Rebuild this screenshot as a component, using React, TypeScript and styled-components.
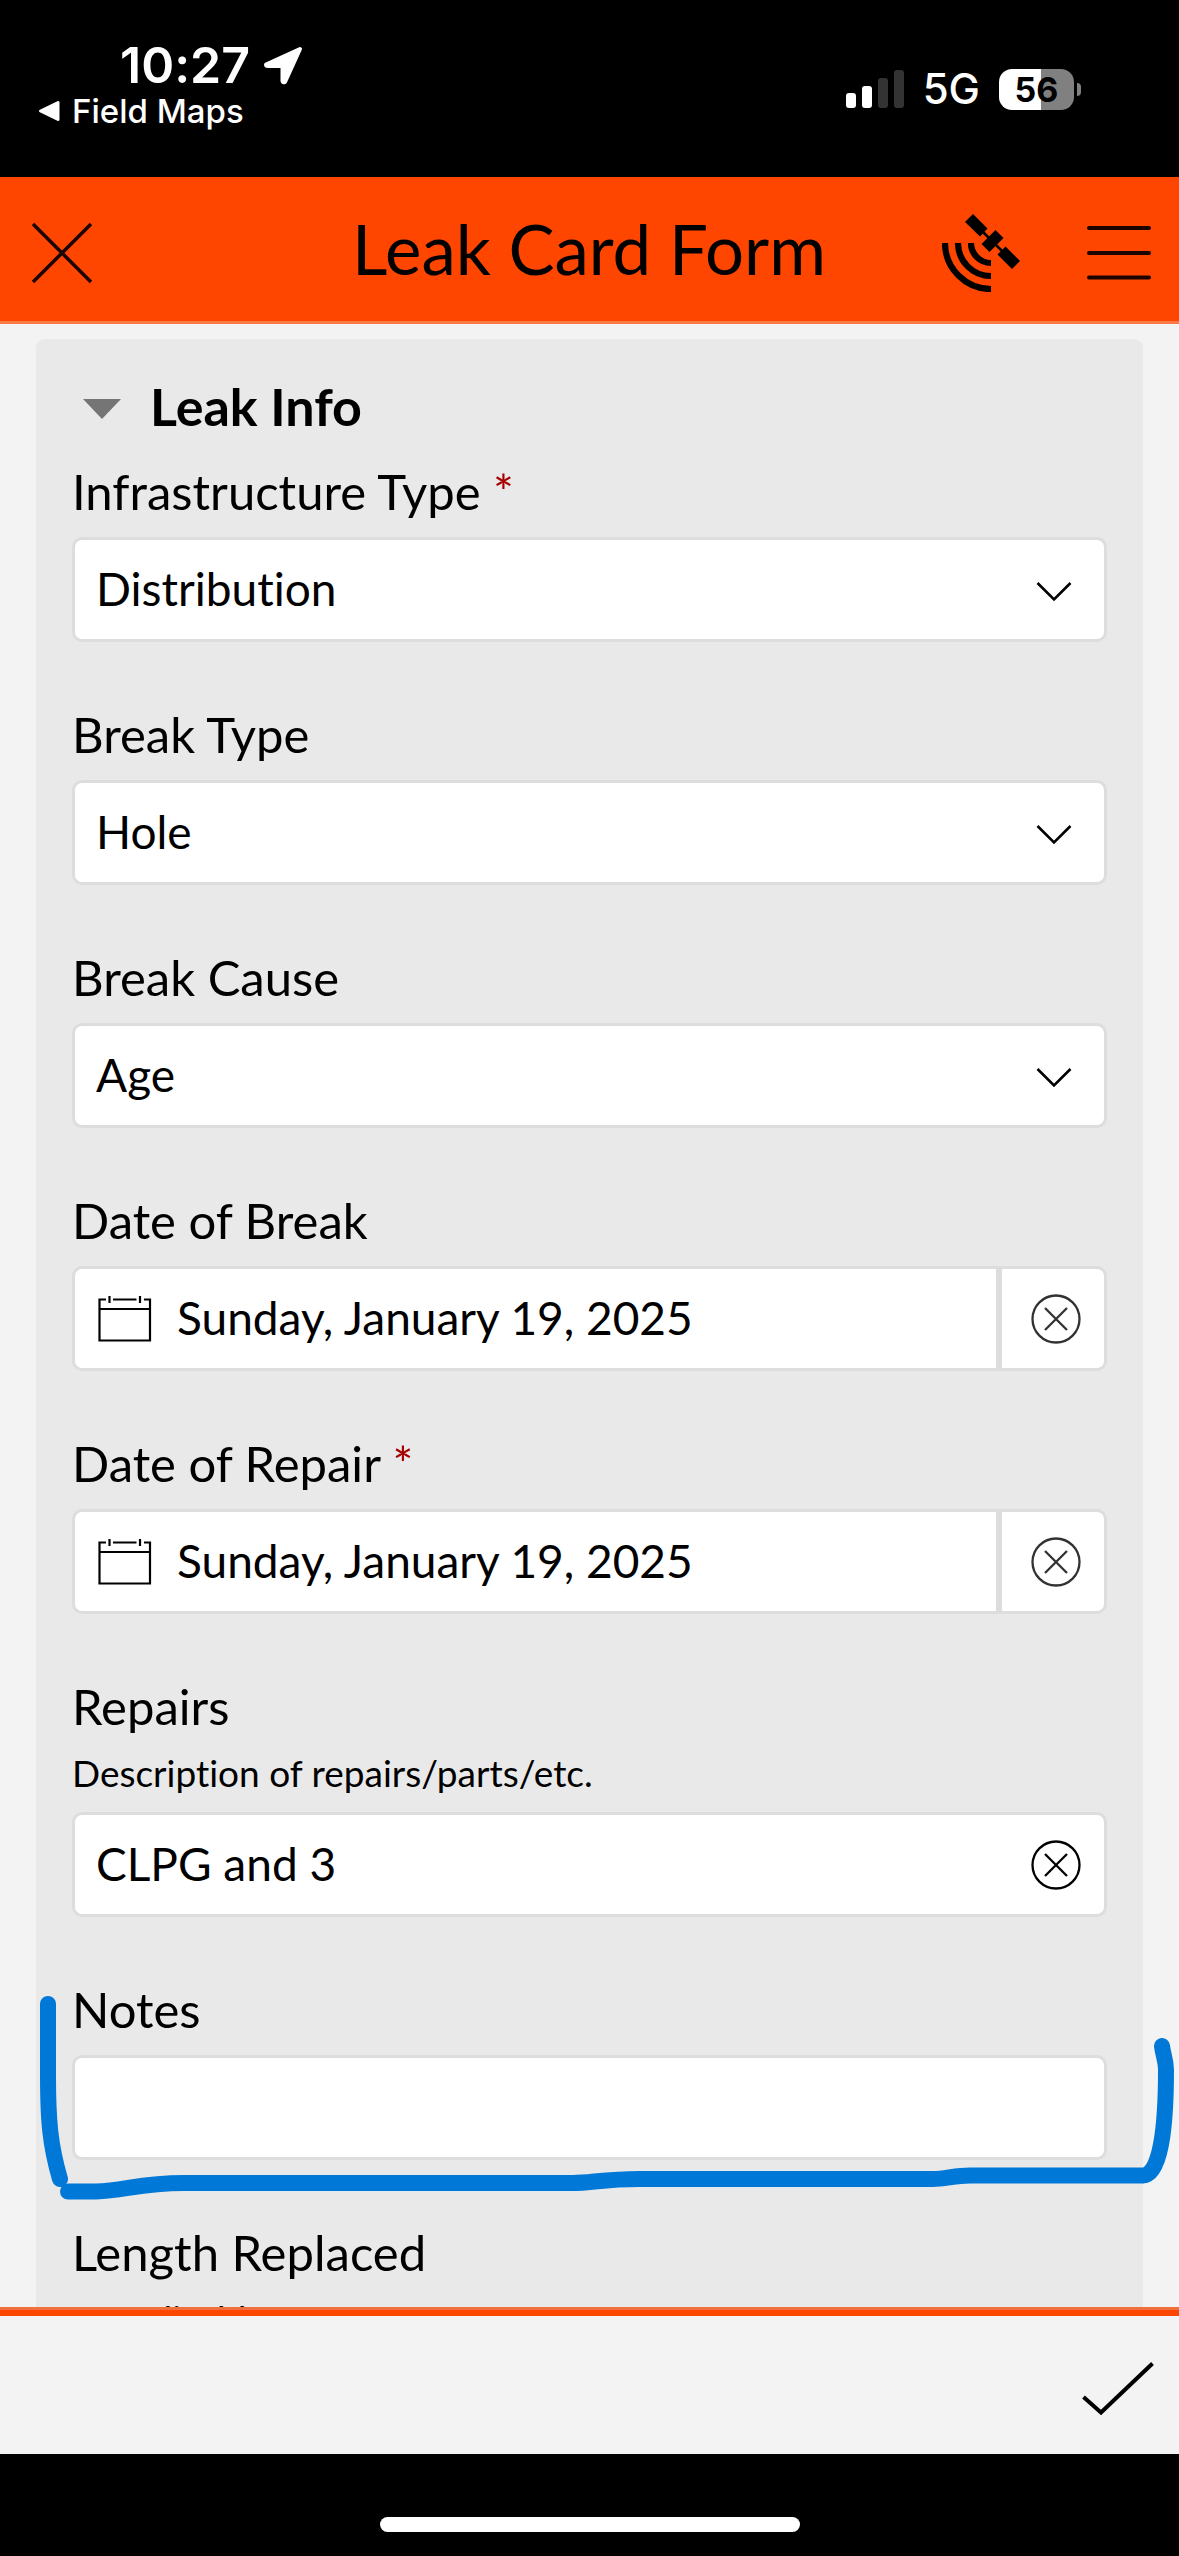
import React, { useState } from "react";
import styled, { createGlobalStyle } from "styled-components";

const color = {
  brand: "#ff4600",
  brandEdge: "#fb7a48",
  page: "#f3f3f3",
  panel: "#e9e9e9",
  border: "#dddddd",
  required: "#a80000",
  ink: "#000000",
  marker: "#0078d8",
};

const GlobalStyle = createGlobalStyle`
  *, *::before, *::after { box-sizing: border-box; }
  body { margin: 0; background: #000; }
  button, input, select { font: inherit; color: inherit; margin: 0; }
  button { border: 0; padding: 0; background: none; cursor: pointer; }
  svg { display: block; flex: none; }
`;

const Screen = styled.div`
  display: flex;
  flex-direction: column;
  height: 100vh;
  background: ${color.page};
  color: ${color.ink};
  font-family: Lato, "Open Sans", sans-serif;
  font-variant-ligatures: none;
  overflow: hidden;
`;

/* ---------- status bar ---------- */

const StatusBar = styled.div`
  display: flex;
  justify-content: space-between;
  flex: none;
  height: 177px;
  padding: 37px 105px 0 38px;
  background: #000;
  color: #fff;
  font-family: Inter, sans-serif;
`;

const StatusLeft = styled.div`
  display: flex;
  flex-direction: column;
`;

const Clock = styled.div`
  display: flex;
  align-items: center;
  gap: 12px;
  padding-left: 82px;
  font-size: 50px;
  line-height: 57px;
  font-weight: 600;
`;

const BackLink = styled.a`
  display: flex;
  align-items: center;
  gap: 11px;
  color: inherit;
  text-decoration: none;
  font-size: 33px;
  line-height: 34px;
  font-weight: 500;
`;

const StatusRight = styled.div`
  display: flex;
  align-items: center;
  gap: 19px;
  height: 44px;
  margin-top: 30px;
`;

const Network = styled.span`
  font-size: 42px;
  line-height: 44px;
  font-weight: 500;
`;

const Battery = styled.div`
  position: relative;
  display: flex;
  align-items: center;
  justify-content: center;
  width: 75px;
  height: 41px;
  border-radius: 13px;
  background: linear-gradient(to right, #fff 56%, #808080 56%);
  color: #000;
  font-size: 34px;
  line-height: 41px;
  font-weight: 700;

  &::after {
    content: "";
    position: absolute;
    left: 78px;
    top: 14px;
    width: 4px;
    height: 13px;
    border-radius: 0 4px 4px 0;
    background: #808080;
  }
`;

/* ---------- title bar ---------- */

const TitleBar = styled.header`
  display: grid;
  grid-template-columns: 1fr auto 1fr;
  align-items: center;
  flex: none;
  height: 147px;
  padding: 8px 28px 0 27px;
  background: ${color.brand};
  border-bottom: 3px solid ${color.brandEdge};
`;

const Title = styled.h1`
  margin: 0;
  padding-bottom: 8px;
  font-size: 69px;
  line-height: 80px;
  font-weight: 400;
`;

const BarActions = styled.div`
  display: flex;
  align-items: center;
  justify-content: ${(p: { $end?: boolean }) => (p.$end ? "flex-end" : "flex-start")};
  gap: 67px;
`;

/* ---------- form ---------- */

const Content = styled.main`
  flex: 1;
  min-height: 0;
  overflow: hidden;
  padding: 15px 36px 0;
`;

const Group = styled.section`
  display: flex;
  flex-direction: column;
  padding: 31px 36px 36px;
  border-radius: 9px;
  background: ${color.panel};
`;

const GroupTitle = styled.h2`
  margin: 0 0 20px;
  font-size: 52px;
  line-height: 72px;
  font-weight: 700;
`;

const GroupToggle = styled.button`
  display: flex;
  align-items: center;
  gap: 28px;
  padding-left: 10px;

  svg { margin-top: 6px; }
`;

const Fields = styled.div`
  display: flex;
  flex-direction: column;
  gap: 63px;
`;

const FieldBlock = styled.div`
  position: relative;
  display: flex;
  flex-direction: column;
  gap: 16px;
`;

const Label = styled.label`
  font-size: 49px;
  line-height: 59px;
`;

const Required = styled.span`
  color: ${color.required};
`;

const Hint = styled.div`
  padding-bottom: 2px;
  font-size: 37px;
  line-height: 42px;
`;

const ControlRow = styled.div`
  display: flex;
  height: 105px;
  border: 3px solid ${color.border};
  border-radius: 10px;
  background: #fff;
  overflow: hidden;
  font-size: 46px;
  line-height: 54px;
`;

const Select = styled.select`
  flex: 1;
  min-width: 0;
  padding: 0 0 2px 21px;
  border: 0;
  outline: 0;
  background: none;
  appearance: none;
`;

const SelectBox = styled(ControlRow)`
  position: relative;

  svg {
    position: absolute;
    right: 32px;
    top: 42px;
    pointer-events: none;
  }
`;

const TextInput = styled.input`
  flex: 1;
  min-width: 0;
  height: 100%;
  padding: 0 0 2px 21px;
  border: 0;
  outline: 0;
  background: none;
`;

const DatePart = styled.div`
  display: flex;
  align-items: center;
  gap: 4px;
  flex: 1;
  min-width: 0;
  padding-left: 23px;
  border-right: 6px solid ${color.border};
`;

const ClearButton = styled.button`
  display: flex;
  align-items: center;
  justify-content: flex-end;
  flex: none;
  width: 102px;
  padding-right: 23px;
`;

const Markup = styled.svg`
  position: absolute;
  left: -72px;
  top: 0;
  width: calc(100% + 144px);
  height: 220px;
  z-index: 1;
  pointer-events: none;
`;

/* ---------- footer ---------- */

const Footer = styled.footer`
  flex: none;
  border-top: 3px solid #f0703c;
`;

const FooterBar = styled.div`
  display: flex;
  align-items: center;
  justify-content: flex-end;
  height: 144px;
  padding: 8px 25px 0;
  border-top: 6px solid ${color.brand};
`;

const HomeArea = styled.div`
  display: flex;
  justify-content: center;
  height: 102px;
  padding-top: 63px;
  background: #000;
`;

const HomeIndicator = styled.div`
  width: 420px;
  height: 15px;
  border-radius: 8px;
  background: #fff;
`;

/* ---------- icons ---------- */

const LocationIcon = () => (
  <svg width="42" height="42" viewBox="0 0 42 42" fill="#fff" stroke="#fff" strokeWidth="4" strokeLinejoin="round" aria-hidden="true">
    <path d="M38 4 L4 19.500 Q4 21 6 21 H20.500 V36 Q21 38 23 37 Z" />
  </svg>
);

const BackIcon = () => (
  <svg width="23" height="22" viewBox="0 0 23 22" fill="#fff" stroke="#fff" strokeWidth="3" strokeLinejoin="round" aria-hidden="true">
    <path d="M2.500 11 L20 2.500 V19.500 Z" />
  </svg>
);

const SignalIcon = () => (
  <svg width="58" height="38" viewBox="0 0 58 38" fill="#fff" aria-label="Signal: 2 of 4 bars" role="img">
    <rect x="0" y="23" width="10" height="15" rx="3" />
    <rect x="16" y="16" width="10" height="22" rx="3" />
    <rect x="32" y="8" width="10" height="30" rx="3" fill="#333" />
    <rect x="48" y="0" width="10" height="38" rx="3" fill="#333" />
  </svg>
);

const CloseIcon = () => (
  <svg width="70" height="70" viewBox="0 0 70 70" stroke="#1c0500" strokeWidth="3.500" aria-hidden="true">
    <path d="M6 6 L64 64 M64 6 L6 64" />
  </svg>
);

const SatelliteIcon = () => (
  <svg width="78" height="78" viewBox="0 0 78 78" fill="none" stroke="#000" aria-hidden="true">
    <g strokeWidth="6.200">
      <path d="M3 29 A46 46 0 0 0 49 75" />
      <path d="M16 29 A33 33 0 0 0 49 62" />
      <path d="M29 29 A20 20 0 0 0 49 49" />
    </g>
    <g fill="#000" stroke="none">
      <path d="M31 0 L45.500 14.500 L38 22.500 L23 8 Z" />
      <path d="M63.500 32.500 L78 47 L70 55 L55.500 40.500 Z" />
      <path d="M53.500 16 L61.500 24 L47.500 38 L39.500 30 Z" />
    </g>
    <path d="M40 17 L61 38" strokeWidth="2.500" />
  </svg>
);

const MenuIcon = () => (
  <svg width="64" height="54" viewBox="0 0 64 54" stroke="#1c0500" strokeWidth="4" strokeLinecap="round" aria-hidden="true">
    <path d="M2 2 H62 M2 27 H62 M2 51.500 H62" />
  </svg>
);

const ChevronIcon = () => (
  <svg width="36" height="20" viewBox="0 0 36 20" fill="none" stroke="#000" strokeWidth="2.600" aria-hidden="true">
    <path d="M1.500 1 L18 17.500 L34.500 1" />
  </svg>
);

const TriangleIcon = () => (
  <svg width="40" height="20" viewBox="0 0 40 20" fill="#757575" aria-hidden="true">
    <path d="M1 0 H39 L20 20 Z" />
  </svg>
);

const CalendarIcon = () => (
  <svg width="54" height="46" viewBox="0 0 54 46" fill="none" stroke="#000" strokeWidth="2.200" aria-hidden="true">
    <path d="M8 3.500 H1.500 V44.500 H52 V3.500 H46" />
    <path d="M15 3.500 H38.500 M11.500 0 V7 M42 0 V7 M1.500 13 H52" />
  </svg>
);

const ClearIcon = ({ tone }: { tone: string }) => (
  <svg width="50" height="50" viewBox="0 0 50 50" fill="none" stroke={tone} strokeWidth="2.300" aria-hidden="true">
    <circle cx="25" cy="25" r="23.500" />
    <path d="M14 14 L36 36 M36 14 L14 36" />
  </svg>
);

const CheckIcon = () => (
  <svg width="72" height="56" viewBox="0 0 72 56" fill="none" stroke="#000" strokeWidth="4" aria-hidden="true">
    <path d="M1.500 36 L19 51.500 L70.500 2.500" />
  </svg>
);

/* ---------- fields ---------- */

type FieldProps = {
  id: string;
  label: string;
  hint?: string;
  required?: boolean;
  children?: React.ReactNode;
};

function Field({ id, label, hint, required, children }: FieldProps) {
  return (
    <FieldBlock>
      <Label htmlFor={id}>
        {label}
        {required && <Required> *</Required>}
      </Label>
      {hint && <Hint>{hint}</Hint>}
      {children}
    </FieldBlock>
  );
}

function SelectField({ options, ...rest }: FieldProps & { options: string[] }) {
  const [value, setValue] = useState(options[0]);
  return (
    <Field {...rest}>
      <SelectBox>
        <Select id={rest.id} value={value} onChange={(e) => setValue(e.target.value)}>
          {options.map((o) => (
            <option key={o}>{o}</option>
          ))}
        </Select>
        <ChevronIcon />
      </SelectBox>
    </Field>
  );
}

function DateField({ initial, ...rest }: FieldProps & { initial: string }) {
  const [value, setValue] = useState(initial);
  return (
    <Field {...rest}>
      <ControlRow>
        <DatePart>
          <CalendarIcon />
          <TextInput id={rest.id} value={value} onChange={(e) => setValue(e.target.value)} />
        </DatePart>
        <ClearButton type="button" aria-label={`Clear ${rest.label}`} onClick={() => setValue("")}>
          <ClearIcon tone="#323232" />
        </ClearButton>
      </ControlRow>
    </Field>
  );
}

function TextField({ initial = "", ...rest }: FieldProps & { initial?: string }) {
  const { children, ...field } = rest;
  const [value, setValue] = useState(initial);
  return (
    <Field {...field}>
      <ControlRow>
        <TextInput id={rest.id} value={value} onChange={(e) => setValue(e.target.value)} />
        {value && (
          <ClearButton type="button" aria-label={`Clear ${rest.label}`} onClick={() => setValue("")}>
            <ClearIcon tone="#000" />
          </ClearButton>
        )}
      </ControlRow>
      {children}
    </Field>
  );
}

export default function App() {
  const [open, setOpen] = useState(true);
  return (
    <Screen>
      <GlobalStyle />
      <StatusBar>
        <StatusLeft>
          <Clock>
            10:27
            <LocationIcon />
          </Clock>
          <BackLink href="#field-maps">
            <BackIcon />
            Field Maps
          </BackLink>
        </StatusLeft>
        <StatusRight>
          <SignalIcon />
          <Network>5G</Network>
          <Battery>56</Battery>
        </StatusRight>
      </StatusBar>

      <TitleBar>
        <BarActions>
          <button type="button" aria-label="Close">
            <CloseIcon />
          </button>
        </BarActions>
        <Title>Leak Card Form</Title>
        <BarActions $end>
          <button type="button" aria-label="Location status">
            <SatelliteIcon />
          </button>
          <button type="button" aria-label="Menu">
            <MenuIcon />
          </button>
        </BarActions>
      </TitleBar>

      <Content>
        <Group>
          <GroupTitle>
            <GroupToggle type="button" aria-expanded={open} onClick={() => setOpen(!open)}>
              <TriangleIcon />
              Leak Info
            </GroupToggle>
          </GroupTitle>
          {open && (
            <Fields>
              <SelectField id="infrastructure" label="Infrastructure Type" required options={["Distribution"]} />
              <SelectField id="break-type" label="Break Type" options={["Hole"]} />
              <SelectField id="break-cause" label="Break Cause" options={["Age"]} />
              <DateField id="break-date" label="Date of Break" initial="Sunday, January 19, 2025" />
              <DateField id="repair-date" label="Date of Repair" required initial="Sunday, January 19, 2025" />
              <TextField id="repairs" label="Repairs" hint="Description of repairs/parts/etc." initial="CLPG and 3" />
              <TextField id="notes" label="Notes">
                <Markup viewBox="0 0 1179 220" preserveAspectRatio="none" fill="none" stroke={color.marker} strokeWidth="16" strokeLinecap="round" strokeLinejoin="round" aria-hidden="true">
                  <path d="M48 24 V95 C48 140 50 165 60 199" />
                  <path d="M68 211.500 H96 C125 210.500 140 203 184 203 H573 C590 203 605 199 640 199 H933 C945 199 955 195.500 970 195.500 H1143 C1160 195 1166 150 1166 90 C1166 80 1163 75 1162 66" />
                </Markup>
              </TextField>
              <TextField id="length" label="Length Replaced" hint="If applicable" />
            </Fields>
          )}
        </Group>
      </Content>

      <Footer>
        <FooterBar>
          <button type="button" aria-label="Submit">
            <CheckIcon />
          </button>
        </FooterBar>
        <HomeArea>
          <HomeIndicator />
        </HomeArea>
      </Footer>
    </Screen>
  );
}
